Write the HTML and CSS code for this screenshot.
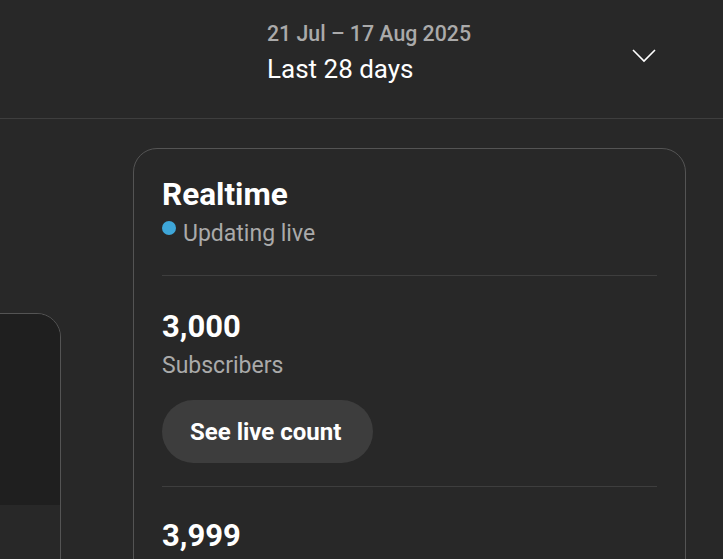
FILE: index.html
```html
<!DOCTYPE html>
<html lang="en">
<head>
    <meta charset="UTF-8">
    <meta name="viewport" content="width=device-width, initial-scale=1.0">
    <title>Channel analytics</title>
    <link rel="stylesheet" href="styles.css">
</head>
<body>
    <div class="header">
        <div class="period-picker">
            <div class="period-text">
                <div class="period-range">21 Jul – 17 Aug 2025</div>
                <div class="period-label">Last 28 days</div>
            </div>
            <svg class="chevron" width="24" height="24" viewBox="0 0 24 24">
                <polyline points="1 7 12 18 23 7" fill="none" stroke="#fff" stroke-width="1.6"/>
            </svg>
        </div>
    </div>

    <div class="main">
        <div class="side-card">
            <div class="side-card-top"></div>
        </div>

        <div class="card">
            <div class="card-head">
                <h2>Realtime</h2>
                <p class="live"><span class="live-dot"></span>Updating live</p>
            </div>
            <div class="stat">
                <div class="stat-value">3,000</div>
                <div class="stat-label">Subscribers</div>
                <button class="pill">See live count</button>
            </div>
            <div class="stat stat-next">
                <div class="stat-value">3,999</div>
            </div>
        </div>
    </div>
</body>
</html>
```

FILE: styles.css
```css
html, body {
    height: 559px;
    overflow: hidden;
}
body {
    font-family: Roboto, "Liberation Sans", sans-serif;
    background-color: #282828;
    color: white;
    margin: 0;
}
.header {
    height: 119px;
    border-bottom: 1px solid #3e3e3e;
    box-sizing: border-box;
    padding-top: 20px;
}
.period-picker {
    display: flex;
    justify-content: space-between;
    align-items: flex-start;
    margin-left: 267px;
    width: 389px;
}
.period-range {
    font-size: 21.3px;
    line-height: 28px;
    font-weight: 500;
    color: #aaaaaa;
}
.period-label {
    font-size: 26px;
    line-height: 34px;
    margin-top: 4px;
}
.chevron {
    margin-top: 23px;
}
.main {
    display: flex;
    align-items: flex-start;
    gap: 72px;
    padding-top: 29px;
}
.side-card {
    width: 300px;
    height: 400px;
    margin-left: -239px;
    margin-top: 165px;
    border: 1px solid #545454;
    border-radius: 24px;
    overflow: hidden;
    box-sizing: border-box;
    flex-shrink: 0;
}
.side-card-top {
    height: 191px;
    background: #1f1f1f;
}
.card {
    width: 553px;
    height: 500px;
    box-sizing: border-box;
    border: 1px solid #545454;
    border-radius: 24px;
    padding: 26px 28px 0;
    flex-shrink: 0;
}
.card-head {
    padding-bottom: 26px;
    border-bottom: 1px solid #3e3e3e;
}
h2 {
    margin: 0;
    font-size: 31.5px;
    line-height: 40px;
    font-weight: 700;
}
.live {
    display: flex;
    align-items: flex-start;
    margin: 4px 0 0;
    font-size: 23px;
    line-height: 30px;
    color: #aaaaaa;
}
.live-dot {
    width: 14px;
    height: 14px;
    border-radius: 50%;
    background: #3ea6d8;
    margin-top: 2px;
    margin-right: 7px;
}
.stat {
    padding-top: 31px;
    padding-bottom: 23px;
    border-bottom: 1px solid #3e3e3e;
}
.stat-next {
    padding-top: 29px;
    border-bottom: none;
}
.stat-value {
    font-size: 31px;
    line-height: 40px;
    font-weight: 700;
}
.stat-label {
    margin-top: 4px;
    font-size: 23px;
    line-height: 30px;
    color: #aaaaaa;
}
.pill {
    margin-top: 19px;
    height: 63px;
    padding: 0 32px 0 28px;
    border: none;
    border-radius: 32px;
    background: #3d3d3d;
    color: white;
    font-family: inherit;
    font-size: 24px;
    font-weight: 700;
    cursor: pointer;
}
```
